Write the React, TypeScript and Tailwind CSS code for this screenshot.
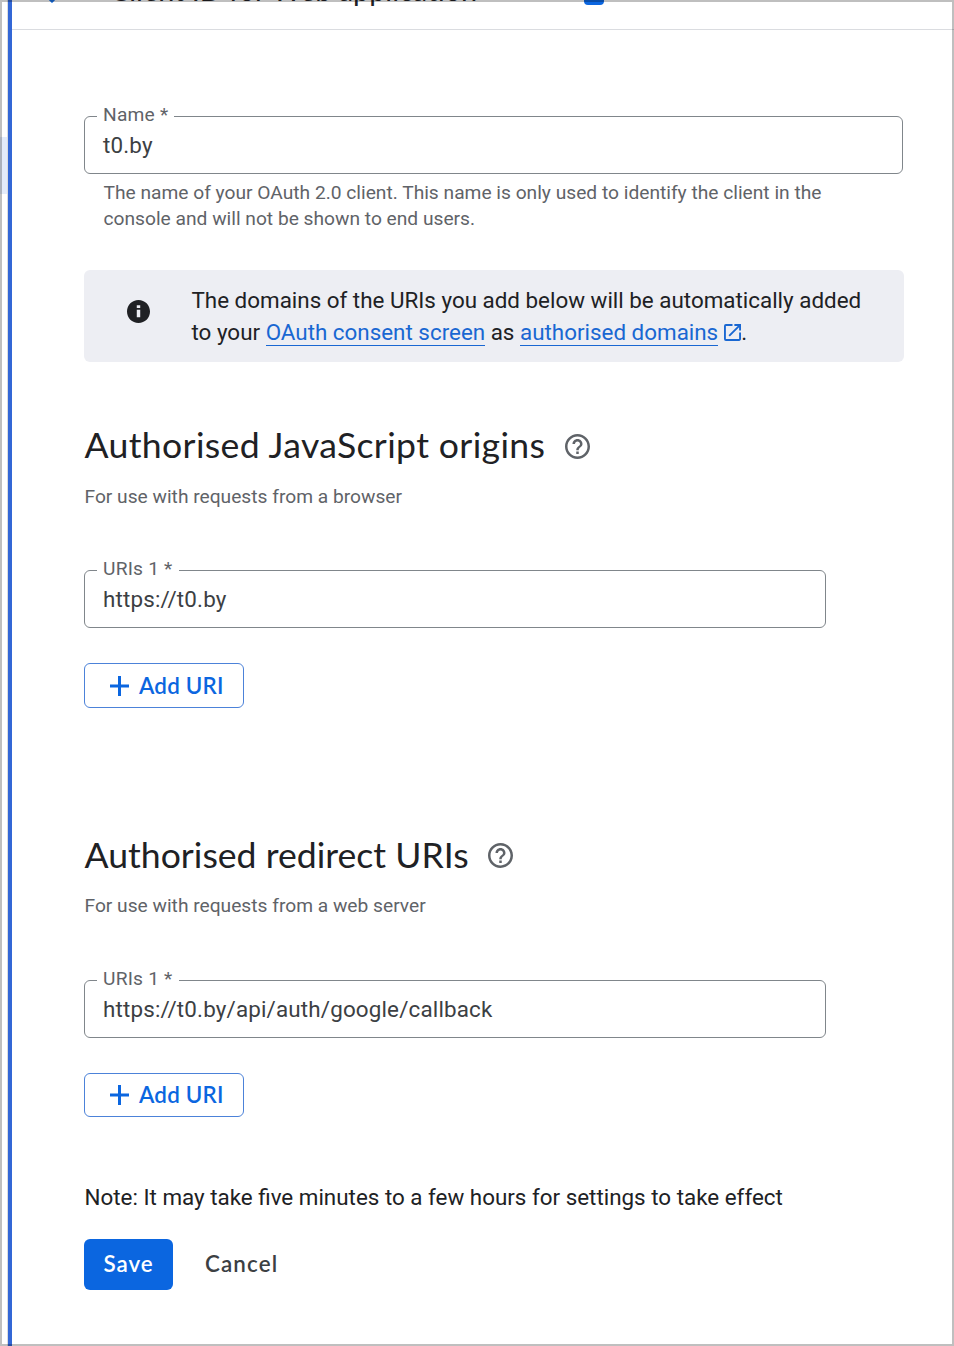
function OutlinedField({ label, value, className }: { label: string; value: string; className: string }) {
  return (
    <div className={`relative flex h-[58px] items-center rounded-[6px] border border-[#80868b] pl-[18px] ${className}`}>
      <label className="absolute -top-[15px] left-[12px] bg-white pr-[6px] pl-[6px] text-[19.2px] leading-[26px] tracking-[0.2px] whitespace-nowrap text-[#5f6368]">
        {label}
      </label>
      <span className="text-[22.4px] leading-8 tracking-[0.16px] text-[#3c4043]">{value}</span>
    </div>
  );
}

function HelpIcon({ className }: { className: string }) {
  return (
    <svg viewBox="2 2 20 20" className={`size-[25px] shrink-0 ${className}`} fill="#5f6368">
      <path d="M11 18h2v-2h-2v2zm1-16C6.48 2 2 6.48 2 12s4.48 10 10 10 10-4.48 10-10S17.52 2 12 2zm0 18c-4.41 0-8-3.59-8-8s3.59-8 8-8 8 3.59 8 8-3.59 8-8 8zm0-14c-2.21 0-4 1.79-4 4h2c0-1.1.9-2 2-2s2 .9 2 2c0 2-3 1.75-3 5h2c0-2.25 3-2.5 3-5 0-2.21-1.79-4-4-4z" />
    </svg>
  );
}

function SectionTitle({ text, className, iconClassName }: { text: string; className: string; iconClassName: string }) {
  return (
    <div className="flex h-11 items-center gap-[19px] pl-[0.5px]">
      <h2 className={`font-['Lato',sans-serif] text-[35.6px] leading-[44px] whitespace-nowrap text-[#202124] ${className}`}>{text}</h2>
      <HelpIcon className={iconClassName} />
    </div>
  );
}

function AddButton({ className }: { className: string }) {
  return (
    <button className={`flex w-[160px] items-center rounded-[6px] border border-[#4c82d9] pl-6 font-['Lato',sans-serif] text-[22.4px] font-semibold tracking-[0.2px] text-[#0b66e0] ${className}`}>
      <svg viewBox="0 0 20 20" className="mr-[10px] size-5" fill="currentColor">
        <path d="M9 0h3v8.5h8v3h-8V20H9v-8.5H1v-3h8z" />
      </svg>
      <span className="whitespace-nowrap">Add URI</span>
    </button>
  );
}

export default function App() {
  return (
    <div className="relative flex h-[1346px] w-[954px] overflow-hidden bg-white font-['Roboto',sans-serif]">
      <aside className="w-2 shrink-0 border-r border-[#dadce0]">
        <div className="mt-[137px] h-[57px] bg-[#e3ebfa]" />
      </aside>
      <div className="w-1 shrink-0 bg-[#3367d6]" />
      <main className="flex min-w-0 flex-1 flex-col">
        <header className="flex h-[30px] shrink-0 items-start overflow-hidden border-b border-[#dadce0]">
          <svg viewBox="0 0 24 24" className="-mt-[21px] ml-[28px] size-6" fill="none" stroke="#1a73e8" strokeWidth="3">
            <path d="M22 12H3M12 2l-10 10 10 10" transform="rotate(-90 12 12)" />
          </svg>
          <h1 className="-mt-[29px] ml-[46px] w-[358px] font-['Lato',sans-serif] text-[28.8px] leading-[38px] whitespace-nowrap text-[#202124]">
            Client ID for Web application
          </h1>
          <div className="-mt-[20px] ml-[116px] h-[25px] w-5 rounded-[4px] bg-[#0b66e0]" />
        </header>
        <div className="flex flex-col pl-[72px]">
          <OutlinedField label="Name *" value="t0.by" className="mt-[86px] w-[819px]" />
          <p className="mt-[6px] ml-[19.5px] text-[19.2px] leading-[26px] whitespace-nowrap text-[#5f6368]">
            The name of your OAuth 2.0 client. This name is only used to identify the client in the
            <br />
            console and will not be shown to end users.
          </p>

          <div className="mt-[38px] flex h-[92px] w-[820px] rounded-[6px] bg-[#edeef3] pt-[14px] pl-[43px]">
            <svg viewBox="2 2 20 20" className="mt-[16px] mr-[41.5px] size-[23px] shrink-0" fill="#202124">
              <path d="M12 2C6.48 2 2 6.48 2 12s4.48 10 10 10 10-4.48 10-10S17.52 2 12 2zm1.5 15h-3v-6.5h3V17zm0-8h-3V6.5h3V9z" />
            </svg>
            <p className="text-[22.4px] leading-8 whitespace-nowrap text-[#202124]">
              The domains of the URIs you add below will be automatically added
              <br />
              to your{" "}
              <a className="border-b border-[#1967d2] text-[#1967d2]">OAuth consent screen</a> as{" "}
              <a className="border-b border-[#1967d2] text-[#1967d2]">authorised domains</a>
              <svg viewBox="3 3 18 18" className="ml-[6px] inline size-[17px] align-[-1px]" fill="#1967d2">
                <path d="M19 19H5V5h7V3H5a2 2 0 0 0-2 2v14a2 2 0 0 0 2 2h14c1.1 0 2-.9 2-2v-7h-2v7zM14 3v2h3.59l-9.83 9.83 1.41 1.41L19 6.41V10h2V3h-7z" />
              </svg>
              .
            </p>
          </div>

          <section className="mt-[61px] flex flex-col">
            <SectionTitle text="Authorised JavaScript origins" className="tracking-[0.37px]" iconClassName="mt-[2px] ml-px" />
            <p className="mt-[17px] pl-[0.5px] text-[19.2px] leading-[26px] text-[#5f6368]">For use with requests from a browser</p>
            <OutlinedField label="URIs 1 *" value="https://t0.by" className="mt-[60px] w-[742px]" />
            <AddButton className="mt-[35px] h-[45px]" />
          </section>

          <section className="mt-[125px] flex flex-col">
            <SectionTitle text="Authorised redirect URIs" className="tracking-[0.02px]" iconClassName="mt-px" />
            <p className="mt-[16px] pl-[0.5px] text-[19.2px] leading-[26px] text-[#5f6368]">For use with requests from a web server</p>
            <OutlinedField label="URIs 1 *" value="https://t0.by/api/auth/google/callback" className="mt-[61px] w-[742px]" />
            <AddButton className="mt-[35px] h-[44px]" />
          </section>

          <p className="mt-[64px] pl-[0.5px] text-[22.4px] leading-8 whitespace-nowrap text-[#202124]">
            Note: It may take five minutes to a few hours for settings to take effect
          </p>
          <div className="mt-[26px] flex h-[51px] items-center font-['Lato',sans-serif] text-[22.4px] font-semibold">
            <button className="h-[51px] w-[89px] rounded-[6px] bg-[#0b66e0] pb-px tracking-[0.9px] text-white">Save</button>
            <button className="ml-8 pb-px tracking-[1.1px] text-[#3c4043]">Cancel</button>
          </div>
        </div>
      </main>
      <div className="pointer-events-none absolute inset-0 border-2 border-black/25" />
    </div>
  );
}
